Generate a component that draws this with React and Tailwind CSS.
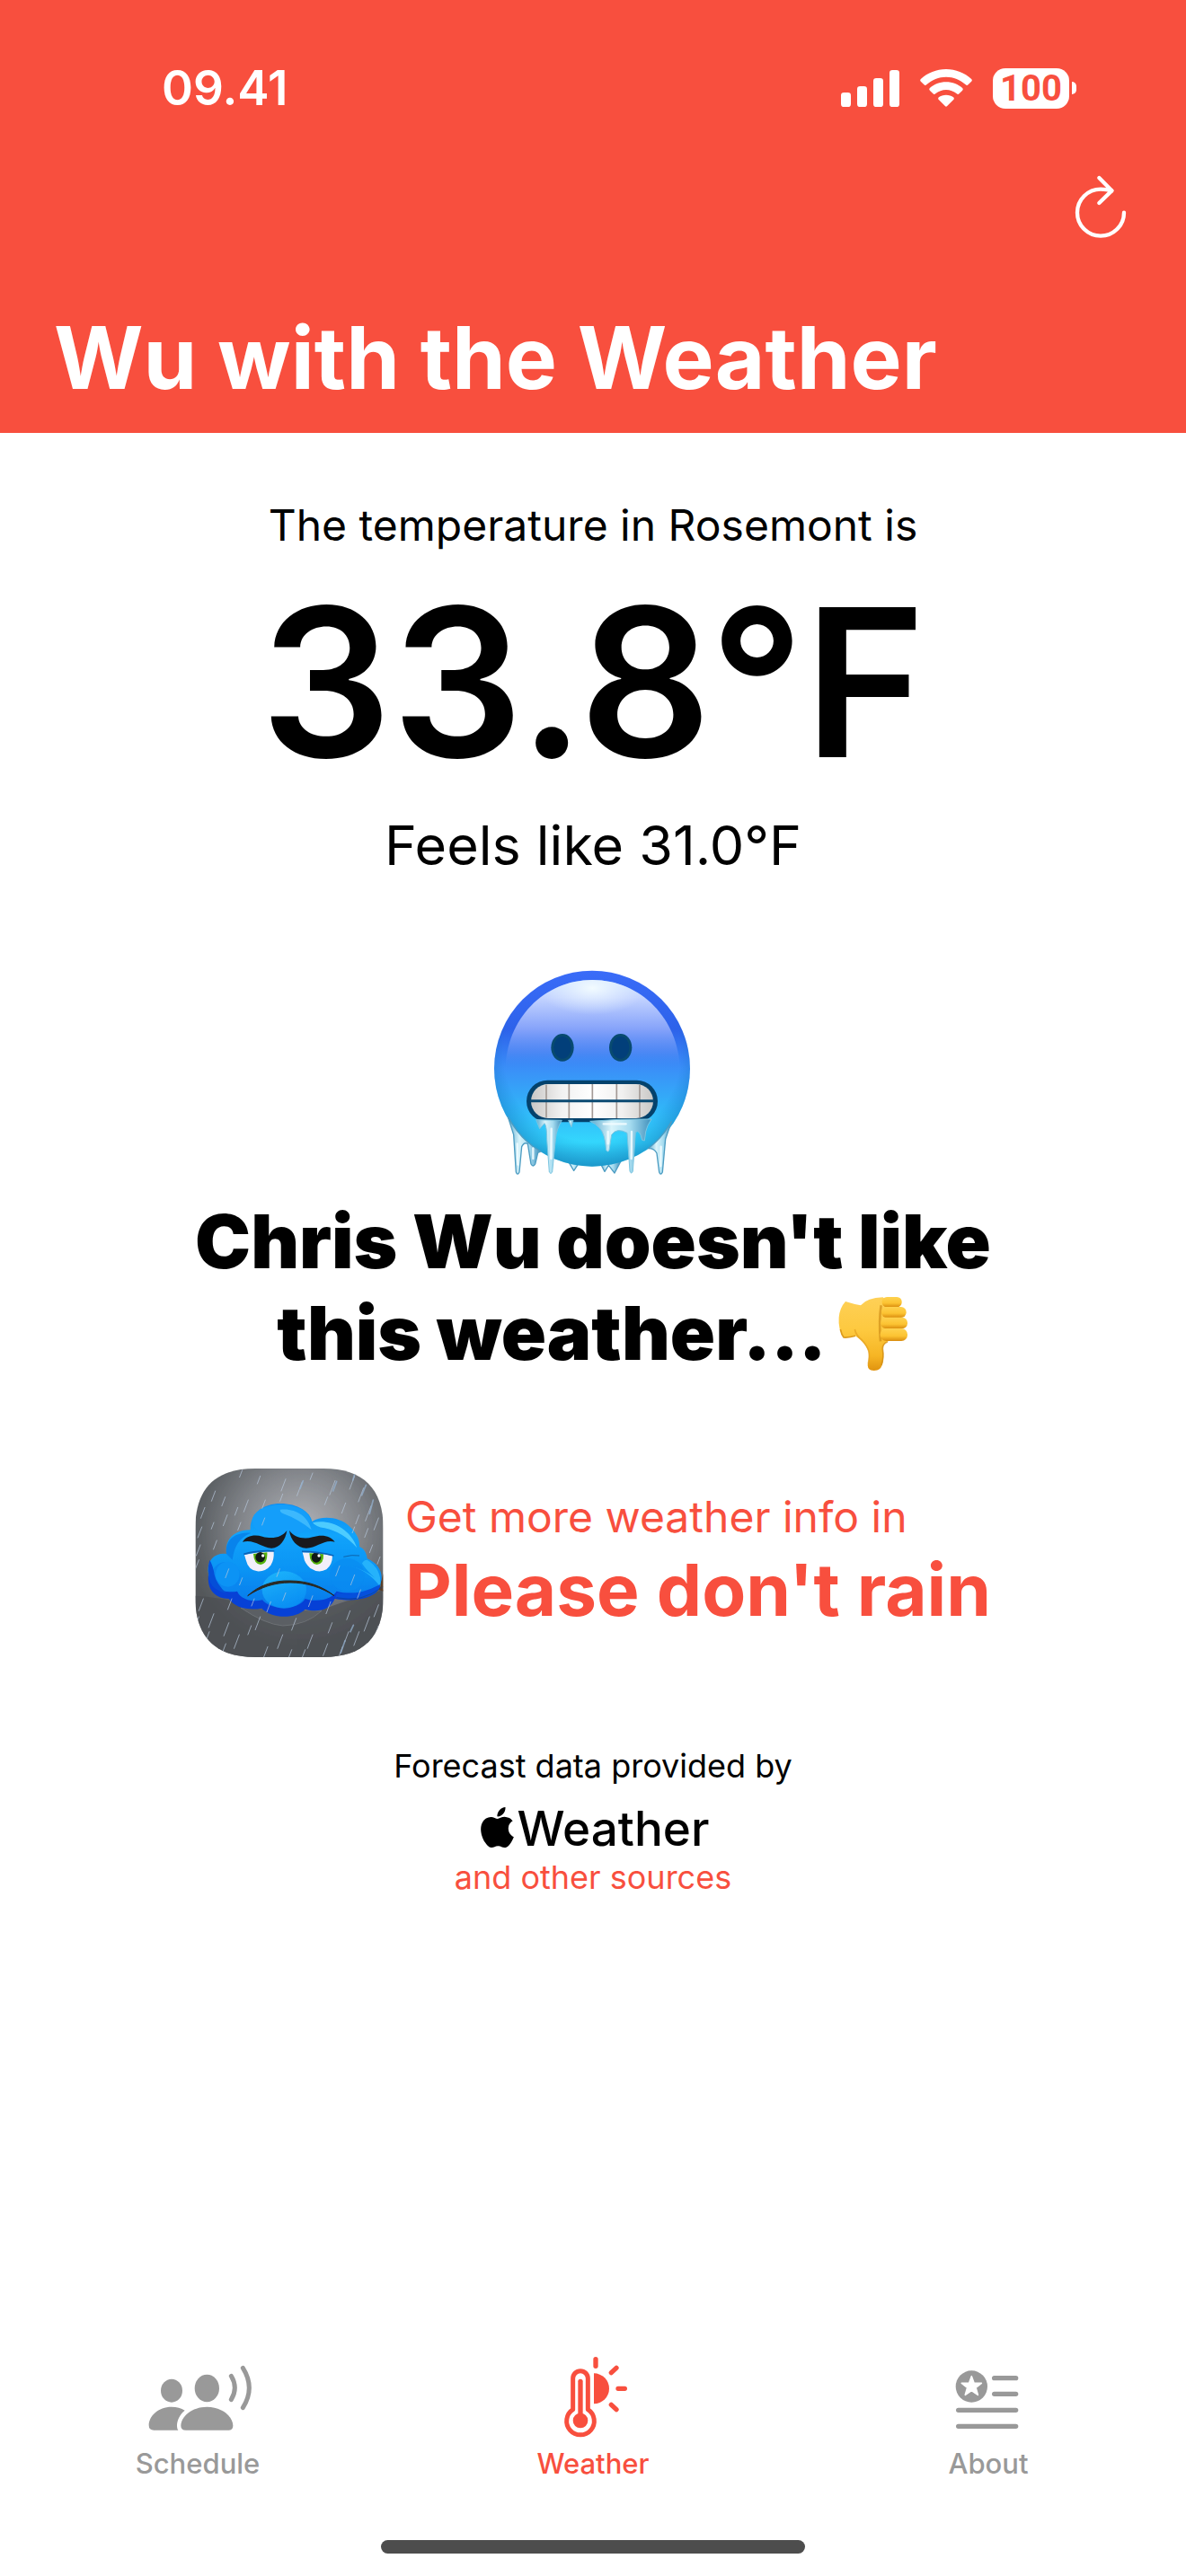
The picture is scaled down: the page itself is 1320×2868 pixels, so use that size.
import React from "react";
import { SiApple } from "react-icons/si";

function SignalIcon() {
  return (
    <svg viewBox="111 78 195 123" className="h-[41px] w-[65px]" fill="currentColor" aria-hidden="true">
      <rect x="111" y="153" width="33" height="48" rx="10" />
      <rect x="165" y="132" width="33" height="69" rx="10" />
      <rect x="219" y="105" width="33" height="96" rx="10" />
      <rect x="273" y="78" width="33" height="123" rx="10" />
    </svg>
  );
}

function WifiIcon() {
  return (
    <svg viewBox="374 76 173 126" className="h-[42px] w-[58px]" fill="currentColor" aria-hidden="true">
      <path d="M460.500 76C493 76 522 88 545 109Q549 113 545 117L534 128Q530 132 526 128C508 111 485 102 460.500 102S413 111 395 128Q391 132 387 128L376 117Q372 113 376 109C399 88 428 76 460.500 76Z" />
      <path d="M460.500 119C482 119 501 127 515 139Q519 143 515 147L504 158Q500 162 496 158C486 150 474 145 460.500 145S435 150 425 158Q421 162 417 158L406 147Q402 143 406 139C420 127 439 119 460.500 119Z" />
      <path d="M460.500 162C470 162 479 165 485 170Q489 174 485 178L464 199Q460.500 203 457 199L436 178Q432 174 436 170C442 165 451 162 460.500 162Z" />
    </svg>
  );
}

function Battery() {
  return (
    <div className="flex items-center gap-[3px]" role="img" aria-label="Battery 100 percent">
      <div className="flex h-[45px] w-[85px] items-center justify-center rounded-[14px] bg-white font-['Roboto',sans-serif] text-[40px] leading-[45px] font-bold text-[#f84f3e]">
        100
      </div>
      <div className="h-[14px] w-[5px] rounded-r-full bg-white" />
    </div>
  );
}

function RefreshIcon() {
  return (
    <svg viewBox="873 432 207 216" className="h-[72px] w-[69px]" fill="none" stroke="currentColor" strokeWidth="13" strokeLinecap="round" strokeLinejoin="round" aria-hidden="true">
      <path d="M1053 560A78 78 0 1 1 975 482Q995 482 1012 487" />
      <path d="M970 444L1012 487L970 528" />
    </svg>
  );
}

function ColdFace() {
  return (
    <svg viewBox="45 60 690 690" className="h-[230px] w-[230px]" role="img" aria-label="Freezing face">
      <defs>
        <linearGradient id="face" x1="0" y1="0" x2="0" y2="1">
          <stop offset="0" stopColor="#3a6cf8" />
          <stop offset="0.300" stopColor="#2d62ea" />
          <stop offset="0.500" stopColor="#3a8ff8" />
          <stop offset="0.700" stopColor="#31b4f8" />
          <stop offset="0.880" stopColor="#34d8fd" />
          <stop offset="1" stopColor="#2cc6e6" />
        </linearGradient>
        <radialGradient id="faceEdge" cx="0.500" cy="0.420" r="0.580">
          <stop offset="0.780" stopColor="#0f6fc4" stopOpacity="0" />
          <stop offset="1" stopColor="#0f72b4" stopOpacity="0.550" />
        </radialGradient>
        <linearGradient id="shine" x1="0" y1="0" x2="0" y2="1">
          <stop offset="0" stopColor="#d3e6ff" />
          <stop offset="0.200" stopColor="#c3d3ff" />
          <stop offset="0.550" stopColor="#86a3fa" />
          <stop offset="0.800" stopColor="#568cf5" stopOpacity="0.800" />
          <stop offset="1" stopColor="#3f90f8" stopOpacity="0" />
        </linearGradient>
        <radialGradient id="glow" cx="0.500" cy="0.500" r="0.500">
          <stop offset="0" stopColor="#f2fbff" />
          <stop offset="1" stopColor="#e0eeff" stopOpacity="0" />
        </radialGradient>
        <clipPath id="shineArea">
          <path d="M98 390C100 225 225 93 388 93S676 225 680 390Z" />
        </clipPath>
        <linearGradient id="teeth" x1="0" y1="0" x2="1" y2="0">
          <stop offset="0" stopColor="#c9c8c6" />
          <stop offset="0.250" stopColor="#f1f1f1" />
          <stop offset="0.500" stopColor="#ffffff" />
          <stop offset="0.750" stopColor="#f0f0ef" />
          <stop offset="1" stopColor="#c9c8c6" />
        </linearGradient>
        <linearGradient id="ice" x1="0" y1="0" x2="1" y2="0">
          <stop offset="0" stopColor="#5aa9cf" />
          <stop offset="0.350" stopColor="#d9f4fb" />
          <stop offset="0.650" stopColor="#a6dcf0" />
          <stop offset="1" stopColor="#3f8fbb" />
        </linearGradient>
      </defs>
      <g fill="url(#ice)" stroke="#4c9cc2" strokeWidth="4" strokeLinejoin="round">
        <path d="M308 700L326 730L346 700Z" />
        <path d="M412 700L429 733L442 712L462 738L482 700Z" />
      </g>
      <circle cx="387" cy="389" r="327" fill="url(#face)" />
      <circle cx="387" cy="389" r="327" fill="url(#faceEdge)" />
      <path d="M98 390C100 225 225 93 388 93S676 225 680 390Z" fill="url(#shine)" />
      <ellipse cx="388" cy="120" rx="180" ry="90" fill="url(#glow)" clipPath="url(#shineArea)" />
      <ellipse cx="288" cy="319" rx="38" ry="46" fill="#084a70" />
      <ellipse cx="288" cy="319" rx="29" ry="37" fill="#023f7a" />
      <ellipse cx="482" cy="319" rx="38" ry="46" fill="#084a70" />
      <ellipse cx="482" cy="319" rx="29" ry="37" fill="#023f7a" />
      <rect x="168" y="428" width="438" height="140" rx="70" fill="#04426c" />
      <rect x="183" y="441" width="408" height="114" rx="57" fill="url(#teeth)" />
      <path d="M234 443V553M310 441V555M388 441V555M469 441V555M546 443V553" stroke="#a39a96" strokeWidth="5" />
      <path d="M180 497H594" stroke="#0b4a72" strokeWidth="9" />
      <g fill="url(#ice)" stroke="#4c9cc2" strokeWidth="4" strokeLinejoin="round">
        <path d="M106 550L125 610L133 735Q138 748 144 735L152 650Q160 634 172 640L183 708Q190 720 197 708L206 670L216 666Q150 630 106 550Z" />
        <path d="M652 566L632 625L622 735Q616 748 611 735L603 672Q595 655 574 656Q622 620 652 566Z" />
      </g>
      <g fill="url(#ice)" stroke="#7cc5e0" strokeWidth="3" strokeLinejoin="round">
        <path d="M200 560L286 562Q268 590 265 625L254 735Q249 744 244 735L236 625Q236 580 228 572L212 590Z" />
        <path d="M308 562H324L318 584Z" />
        <path d="M380 565Q480 556 585 558Q570 580 566 600L562 630L554 628Q546 590 532 602L523 732Q518 744 513 732L504 604Q470 585 452 610L444 662Q440 670 434 662Q430 606 412 588Q398 572 380 565Z" />
      </g>
      <g stroke="#f1fcff" strokeWidth="7" strokeLinecap="round" fill="none" opacity="0.900">
        <path d="M251 590L250 690M519 600L518 690M440 600L440 640M137 640L139 710M617 650L616 715M190 655V690M425 574H500" />
      </g>
    </svg>
  );
}

function ThumbsDown() {
  return (
    <svg viewBox="70 36 240 258" className="inline-block h-[86px] w-[80px] align-[-14px]" role="img" aria-label="Thumbs down">
      <defs>
        <linearGradient id="hand" x1="0" y1="0" x2="0" y2="1">
          <stop offset="0" stopColor="#fed057" />
          <stop offset="0.450" stopColor="#fdc93f" />
          <stop offset="0.800" stopColor="#f6b524" />
          <stop offset="1" stopColor="#e0930f" />
        </linearGradient>
        <linearGradient id="finger" x1="0" y1="0" x2="0" y2="1">
          <stop offset="0" stopColor="#fed24f" />
          <stop offset="0.600" stopColor="#fcc332" />
          <stop offset="1" stopColor="#d98c0e" />
        </linearGradient>
      </defs>
      <path d="M97 57Q125 66 148 70Q170 44 222 43L240 60L240 190Q222 198 222 215Q227 245 219 270Q213 288 192 288Q172 288 171 270Q178 240 173 221Q160 192 130 172Q112 178 91 177Q72 150 75 110Q78 78 97 57Z" fill="url(#hand)" />
      <path d="M80 150Q84 168 91 177Q112 178 130 172" stroke="#dc9a1c" strokeWidth="5" fill="none" />
      <path d="M128 150Q132 170 152 186Q170 206 175 224Q178 240 173 266" stroke="#e3a021" strokeWidth="5" fill="none" opacity="0.700" />
      <path d="M216 70Q208 120 214 190" stroke="#c98510" strokeWidth="8" fill="none" opacity="0.600" />
      <path d="M238 192Q221 198 221 215Q226 245 217 270" stroke="#cf8a12" strokeWidth="5" fill="none" opacity="0.700" />
      <rect x="219" y="42" width="66" height="34" rx="16" fill="url(#finger)" />
      <rect x="217" y="75" width="83" height="36" rx="17" fill="url(#finger)" />
      <rect x="215" y="110" width="89" height="38" rx="18" fill="url(#finger)" />
      <rect x="213" y="147" width="91" height="42" rx="20" fill="url(#finger)" />
    </svg>
  );
}

const rain = [
  [100, 62, 18], [185, 50, 24], [245, 70, 26], [330, 80, 40], [385, 90, 46], [420, 60, 22], [495, 85, 48], [560, 70, 44], [590, 110, 46], [470, 140, 26],
  [95, 120, 34], [60, 175, 36], [128, 140, 30], [205, 150, 40], [170, 175, 26], [262, 150, 28], [320, 130, 24], [530, 160, 34], [575, 200, 30], [615, 170, 50],
  [50, 240, 36], [90, 225, 22], [135, 200, 36], [180, 225, 26], [560, 240, 20], [605, 245, 30], [640, 210, 40], [45, 300, 36], [100, 285, 30], [40, 350, 44],
  [620, 300, 26], [645, 340, 24], [55, 480, 40], [40, 540, 34], [90, 530, 46], [75, 590, 40], [140, 560, 44], [175, 600, 46], [130, 630, 44], [215, 570, 30],
  [245, 540, 44], [270, 640, 44], [320, 600, 46], [350, 650, 30], [365, 545, 40], [420, 600, 46], [395, 650, 36], [470, 630, 40], [485, 560, 34], [520, 640, 50],
  [540, 590, 34], [575, 590, 46], [610, 540, 48], [640, 500, 40], [600, 630, 30], [545, 520, 30], [150, 480, 36], [225, 480, 24], [480, 490, 40], [640, 570, 34],
  [140, 380, 30], [310, 380, 26], [420, 470, 36], [560, 400, 34], [280, 490, 34], [580, 450, 28], [260, 210, 24], [510, 370, 34], [330, 460, 26], [185, 410, 24],
];

function RainApp() {
  return (
    <svg viewBox="28 45 628 630" className="h-[210px] w-[210px] shrink-0" role="img" aria-label="Grumpy rain cloud">
      <defs>
        <clipPath id="tile">
          <path d="M28 245C28 112 95 45 228 45H456C589 45 656 112 656 245V475C656 608 589 675 456 675H228C95 675 28 608 28 475Z" />
        </clipPath>
        <radialGradient id="sky" cx="0.560" cy="0.330" r="0.620">
          <stop offset="0" stopColor="#b4b6bb" />
          <stop offset="0.500" stopColor="#84878c" />
          <stop offset="0.850" stopColor="#5f6367" />
          <stop offset="1" stopColor="#54585b" />
        </radialGradient>
        <linearGradient id="cloud" x1="0" y1="0" x2="0" y2="1">
          <stop offset="0" stopColor="#0d8df2" />
          <stop offset="0.300" stopColor="#12a4fb" />
          <stop offset="0.650" stopColor="#0b93f4" />
          <stop offset="1" stopColor="#0878ea" />
        </linearGradient>
        <linearGradient id="puff" x1="0.200" y1="0" x2="0.700" y2="1">
          <stop offset="0" stopColor="#22bdfd" />
          <stop offset="1" stopColor="#0a93f5" />
        </linearGradient>
      </defs>
      <g clipPath="url(#tile)">
        <rect x="28" y="45" width="628" height="630" fill="url(#sky)" />
        <path d="M28 470Q200 480 340 560Q480 500 656 450V675H28Z" fill="#4b4f52" opacity="0.700" />
        <path d="M180 510Q260 565 320 570Q400 568 450 520Z" fill="#5c6064" stroke="#777b80" strokeWidth="2" />
        <path d="M656 395L640 450L656 455Z" fill="#5b3f28" />
        <path d="M72 400C66 450 95 480 140 480C160 510 205 520 250 512C280 545 360 550 395 515C440 528 480 515 494 480C560 492 625 480 645 440L640 380H90Z" fill="#0842d6" />
        <path d="M132 330C125 280 160 250 212 250C210 195 255 162 312 162C370 162 412 190 418 222C450 202 510 205 545 240C568 262 578 285 576 306C592 312 600 328 602 346C635 360 652 385 650 415C646 445 620 462 585 458C555 462 520 462 500 455C480 485 430 492 395 480C370 520 280 520 252 484C215 492 180 482 168 455C130 462 84 450 76 410C60 370 80 325 132 330Z" fill="url(#cloud)" />
        <ellipse cx="315" cy="220" rx="97" ry="55" fill="#149ffa" />
        <path d="M312 182C360 176 404 202 416 250Q372 214 322 196Q308 188 312 182Z" fill="#45bcfd" opacity="0.850" />
        <path d="M420 226C470 212 545 240 568 310Q520 256 460 244Q430 240 420 226Z" fill="#5ad3ff" opacity="0.850" />
        <path d="M132 330C126 285 160 256 214 260Q160 280 152 350Z" fill="#087de9" opacity="0.800" />
        <ellipse cx="130" cy="405" rx="48" ry="48" fill="#0a86f0" />
        <ellipse cx="136" cy="398" rx="40" ry="42" fill="#0d93f5" />
        <ellipse cx="325" cy="450" rx="74" ry="62" fill="url(#puff)" opacity="0.750" />
        <ellipse cx="535" cy="400" rx="58" ry="55" fill="#0a8bf1" opacity="0.700" />
        <path d="M545 372Q600 380 646 440Q652 380 602 350Q590 350 585 362Q600 385 628 410Q590 380 545 372Z" fill="#27b3fb" />
        <path d="M76 350Q66 385 78 425Q90 452 132 462Q98 430 92 400Q88 370 76 350Z" fill="#064fd8" />
        <path d="M500 458Q560 476 646 432Q640 466 598 474Q540 482 496 476Z" fill="#0750dc" />
        <path d="M500 476Q580 496 655 440M523 340Q550 332 576 336" fill="none" stroke="#124a85" strokeWidth="2" />
        <path d="M192 333Q240 322 290 321Q292 350 280 368Q262 390 235 388Q205 384 197 350Z" fill="#f1effa" />
        <path d="M386 325Q440 326 486 336Q486 366 466 382Q440 396 412 378Q392 360 390 340Z" fill="#f1effa" />
        <path d="M222 330L268 325Q270 364 246 366Q224 364 222 330Z" fill="#55b30d" />
        <path d="M409 328L456 331Q458 364 434 366Q410 364 409 328Z" fill="#55b30d" />
        <ellipse cx="245" cy="341" rx="16" ry="17" fill="#121a17" />
        <ellipse cx="432" cy="342" rx="16" ry="17" fill="#121a17" />
        <circle cx="254" cy="336" r="5" fill="#fff" />
        <circle cx="441" cy="336" r="5" fill="#fff" />
        <path d="M190 331Q240 317 292 321M384 322Q440 322 490 336" fill="none" stroke="#0a63b8" strokeWidth="5" />
        <path d="M186 290C198 268 228 264 252 272C288 282 318 274 334 252C330 284 308 312 282 311C250 310 226 280 186 290Z" fill="#1b1b1f" />
        <path d="M342 252C356 272 386 284 420 274C452 264 480 270 494 290C458 280 432 312 398 311C368 310 346 284 342 252Z" fill="#1b1b1f" />
        <path d="M203 470C240 435 290 418 345 420C405 420 455 440 492 470C450 442 400 426 345 426C292 426 245 442 203 470Z" fill="#2c2a24" stroke="#2c2a24" strokeWidth="3" />
        <g stroke="#b8c8dc" strokeWidth="3" strokeLinecap="round" opacity="0.700">
          {rain.map(([x, y, l], i) => (
            <line key={i} x1={x} y1={y} x2={x - l * 0.38} y2={y + l} />
          ))}
        </g>
        <g stroke="#93b0cf" strokeWidth="5" strokeLinecap="round" opacity="0.750">
          <path d="M562 58L554 84M598 100L584 134M622 150L610 196M500 88L488 120M528 620L514 660M556 568L546 590M388 86L378 112" />
        </g>
      </g>
    </svg>
  );
}

function ScheduleIcon() {
  return (
    <svg viewBox="90 42 360 270" className="h-[90px] w-[120px]" fill="currentColor" aria-hidden="true">
      <ellipse cx="183" cy="155" rx="36" ry="39" />
      <ellipse cx="301" cy="147" rx="41" ry="46" />
      <path d="M124 287Q107 287 107 271C107 240 138 209 183 209C200 209 215 213 227 221C210 235 200 255 201 274Q201 282 205 287Z" />
      <path d="M231 287Q214 287 214 272C214 242 250 209 301 209S388 242 388 272Q388 287 371 287Z" />
      <path d="M382 106Q406 146 382 185M421 79Q463 146 421 212" fill="none" stroke="currentColor" strokeWidth="15" strokeLinecap="round" />
    </svg>
  );
}

function WeatherIcon() {
  return (
    <svg viewBox="105 42 270 270" className="h-[90px] w-[90px]" fill="none" stroke="currentColor" strokeWidth="16" strokeLinecap="round" aria-hidden="true">
      <path d="M173 218V114A25 25 0 0 1 223 114V218A46 46 0 1 1 173 218Z" strokeLinejoin="round" strokeWidth="15" />
      <path d="M198 124V240" />
      <circle cx="198" cy="255" r="25" fill="currentColor" stroke="none" />
      <path d="M243 97A51 51 0 0 1 243 199Z" fill="currentColor" stroke="none" />
      <path d="M249 50V73M301 95L318 79M324 148H346M301 202L318 218" />
    </svg>
  );
}

function AboutIcon() {
  return (
    <svg viewBox="75 42 270 270" className="h-[90px] w-[90px]" aria-hidden="true">
      <circle cx="154" cy="141" r="53" fill="currentColor" />
      <path d="M154 107L162 129L187 130L168 145L175 169L154 155L133 169L140 145L121 130L146 129Z" fill="#fff" stroke="#fff" strokeWidth="5" strokeLinejoin="round" />
      <path d="M230 113H302M230 166H302M110 220H302M110 274H302" stroke="currentColor" strokeWidth="16" strokeLinecap="round" />
    </svg>
  );
}

const tabs = [
  { label: "Schedule", Icon: ScheduleIcon, active: false },
  { label: "Weather", Icon: WeatherIcon, active: true },
  { label: "About", Icon: AboutIcon, active: false },
];

export default function App() {
  return (
    <div className="flex min-h-screen flex-col bg-white font-['Inter',sans-serif] text-black">
      <header className="bg-[#f84f3e] px-[60px] pt-[68px] pb-[22px] text-white">
        <div className="flex h-[60px] items-center justify-between pr-[62px] pl-[120px]">
          <span className="text-[53px] leading-[60px] font-semibold">09.41</span>
          <div className="flex items-center gap-[23px]">
            <SignalIcon />
            <WifiIcon />
            <Battery />
          </div>
        </div>
        <div className="mt-[66px] flex justify-end">
          <button type="button" aria-label="Refresh">
            <RefreshIcon />
          </button>
        </div>
        <h1 className="mt-[70px] text-[96px] leading-[124px] font-bold">Wu with the Weather</h1>
      </header>

      <main className="flex flex-1 flex-col items-center pt-[73px] text-center">
        <p className="text-[48px] leading-[60px]">The temperature in Rosemont is</p>
        <p className="mt-[24px] text-[230px] leading-[240px] font-semibold">33.8°F</p>
        <p className="mt-[22px] text-[61px] leading-[80px]">Feels like 31.0°F</p>
        <div className="mt-[99px]">
          <ColdFace />
        </div>
        <h2 className="mt-[21px] text-[83px] leading-[102px] font-black">
          Chris Wu doesn't like
          <br />
          this weather... <ThumbsDown />
        </h2>
        <a href="#please-dont-rain" className="mt-[100px] flex items-center gap-[24px] text-left text-[#f84f3e]">
          <RainApp />
          <span className="block">
            <span className="block text-[48px] leading-[60px]">Get more weather info in</span>
            <span className="block text-[80px] leading-[102px] font-bold">Please don't rain</span>
          </span>
        </a>
        <p className="mt-[97px] text-[36px] leading-[48px]">Forecast data provided by</p>
        <div className="mt-[16px] flex items-center text-[53px] leading-[60px] font-medium">
          <SiApple className="mb-1 h-[45px] w-[45px]" aria-hidden="true" />
          <span>Weather</span>
        </div>
        <a href="#sources" className="text-[36px] leading-[48px] text-[#f84f3e]">
          and other sources
        </a>
      </main>

      <nav className="grid grid-cols-3">
        {tabs.map(({ label, Icon, active }) => (
          <button
            key={label}
            type="button"
            aria-current={active ? "page" : undefined}
            className={
              active
                ? "flex flex-col items-center gap-[11px] text-[31px] leading-[36px] font-medium text-[#f84f3e]"
                : "flex flex-col items-center gap-[11px] text-[31px] leading-[36px] font-medium text-[#999999]"
            }
          >
            <Icon />
            <span>{label}</span>
          </button>
        ))}
      </nav>
      <div className="flex justify-center pt-[67px] pb-[25px]">
        <div className="h-[15px] w-[472px] rounded-full bg-[#4d4d4d]" />
      </div>
    </div>
  );
}
